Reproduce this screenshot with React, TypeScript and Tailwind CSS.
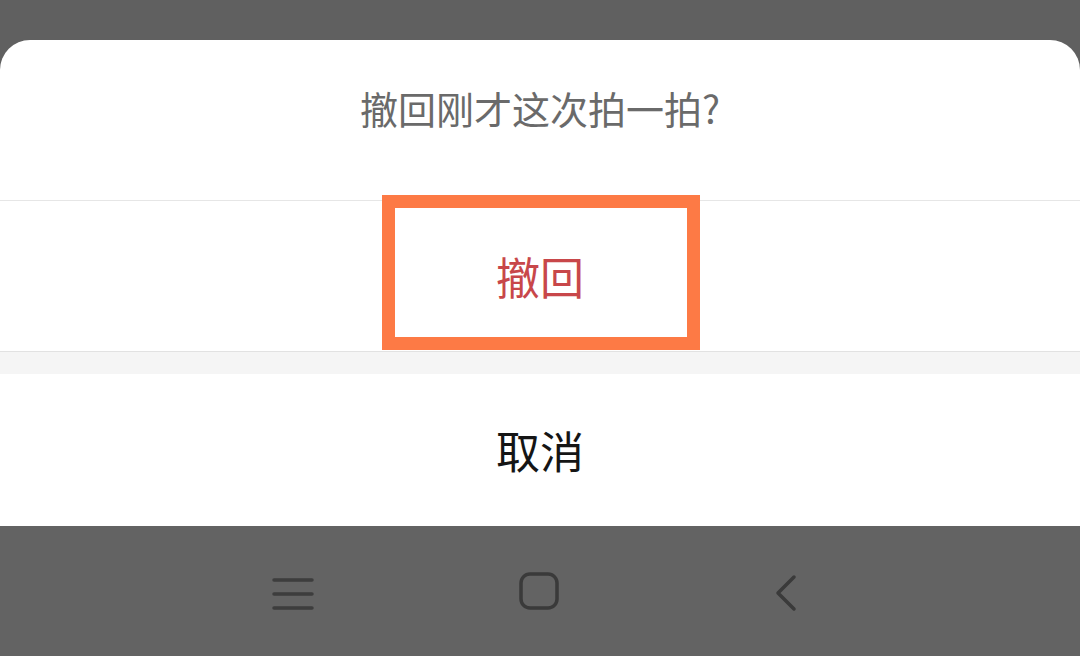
import React from 'react'

const cjk = { fontFamily: '"Noto Sans CJK SC", "Noto Sans", sans-serif' }

function NavBar() {
  return (
    <div className="relative h-[131px] bg-[#636363]">
      <svg className="absolute left-[270px] top-[50px]" width="46" height="36" viewBox="0 0 46 36" fill="none">
        <path d="M4 4h38M4 18h38M4 32h38" stroke="#3d3d3d" strokeWidth="3.5" strokeLinecap="round" />
      </svg>
      <svg className="absolute left-[518px] top-[45px]" width="42" height="40" viewBox="0 0 42 40" fill="none">
        <rect x="3" y="3" width="36" height="34" rx="9" stroke="#3a3a3a" strokeWidth="3.5" />
      </svg>
      <svg className="absolute left-[774px] top-[48px]" width="24" height="38" viewBox="0 0 24 38" fill="none">
        <path d="M20 3L4 19l16 16" stroke="#3a3a3a" strokeWidth="3.5" strokeLinecap="round" strokeLinejoin="round" />
      </svg>
    </div>
  )
}

export default function App() {
  return (
    <div className="flex h-[656px] w-[1080px] flex-col bg-[#606060]" style={cjk}>
      <div className="h-[40px] shrink-0" />
      <div className="flex flex-col rounded-t-[30px] bg-white">
        <div className="flex h-[160px] justify-center pt-[47px]">
          <span className="text-[38px] leading-[42px] text-[#6a6a6a]">撤回刚才这次拍一拍?</span>
        </div>
        <div className="relative flex h-[151px] items-center justify-center border-t border-[#e6e6e6]">
          <span className="text-[44px] leading-[46px] text-[#c8474a]">撤回</span>
          <div className="absolute left-[382px] top-[-6px] h-[155px] w-[318px] border-[13px] border-[#fd7a45]" />
        </div>
        <div className="h-[23px] border-t border-[#e2e2e2] bg-[#f5f5f5]" />
        <div className="flex h-[152px] items-center justify-center">
          <span className="text-[44px] leading-[46px] text-[#151515]">取消</span>
        </div>
      </div>
      <NavBar />
    </div>
  )
}
